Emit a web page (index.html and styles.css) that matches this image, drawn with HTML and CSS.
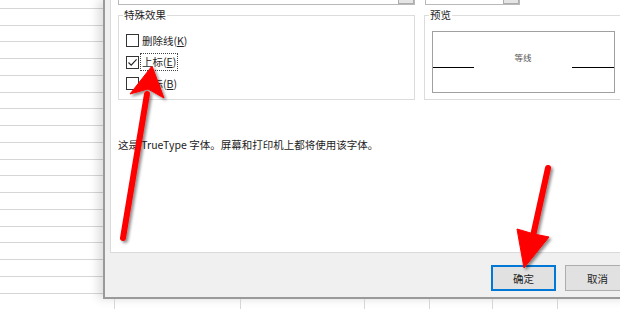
FILE: index.html
```html
<!DOCTYPE html>
<html lang="zh-CN">
<head>
    <meta charset="UTF-8">
    <meta name="viewport" content="width=device-width, initial-scale=1.0">
    <title>设置单元格格式</title>
    <link rel="stylesheet" href="styles.css">
</head>
<body>
    <div class="sheet">
        <div class="dialog">
            <div class="panel">
                <div class="combos">
                    <div class="combo combo-wide"><span class="combo-btn"></span></div>
                    <div class="combo combo-narrow"><span class="combo-btn"></span></div>
                </div>

                <div class="groups">
                    <fieldset class="group group-effects">
                        <legend>特殊效果</legend>
                        <div class="check-row">
                            <span class="box"></span>
                            <span class="label">删除线(<u>K</u>)</span>
                        </div>
                        <div class="check-row">
                            <span class="box checked">
                                <svg width="11" height="11" viewBox="0 0 11 11"><path d="M1.5 5.5 L4.2 8.2 L9.6 2.4" fill="none" stroke="#222" stroke-width="1.1"/></svg>
                            </span>
                            <span class="label focus">上标(<u>E</u>)</span>
                        </div>
                        <div class="check-row">
                            <span class="box"></span>
                            <span class="label">下标(<u>B</u>)</span>
                        </div>
                    </fieldset>

                    <fieldset class="group group-preview">
                        <legend>预览</legend>
                        <div class="preview-box">
                            <div class="sample">
                                <span class="rule"></span>
                                <span class="sample-text">等线</span>
                                <span class="rule rule-right"></span>
                            </div>
                        </div>
                    </fieldset>
                </div>

                <p class="info">这是 TrueType 字体。屏幕和打印机上都将使用该字体。</p>
            </div>

            <div class="footer">
                <button class="btn btn-default">确定</button>
                <button class="btn">取消</button>
            </div>
        </div>

        <div class="foot">
            <span class="cell" style="width:126px"></span>
            <span class="cell" style="width:125px"></span>
            <span class="cell" style="width:65px"></span>
            <span class="cell" style="width:62px"></span>
            <span class="cell" style="width:65px"></span>
            <span class="cell" style="width:63px"></span>
        </div>
    </div>

    <!-- annotation arrows drawn over the screenshot -->
    <svg class="arrows" width="620" height="309" viewBox="0 0 620 309">
        <defs>
            <filter id="shade" x="-50%" y="-50%" width="200%" height="200%">
                <feDropShadow dx="2" dy="2" stdDeviation="1.6" flood-color="#000" flood-opacity="0.45"/>
            </filter>
        </defs>
        <g filter="url(#shade)" fill="#ff0000" stroke="#ff0000">
            <line x1="123" y1="238" x2="147" y2="94" stroke-width="6" stroke-linecap="round"/>
            <polygon points="152,66 130,94 148,89 164,98" stroke-width="1" stroke-linejoin="round"/>
            <line x1="548" y1="168" x2="533" y2="236" stroke-width="6" stroke-linecap="round"/>
            <polygon points="524,268 517,229 534,234 549,237" stroke-width="1" stroke-linejoin="round"/>
        </g>
    </svg>
</body>
</html>
```

FILE: styles.css
```css
body {
    margin: 0;
    width: 620px;
    height: 309px;
    overflow: hidden;
    position: relative;
    background: #fff;
    font-family: "Noto Sans CJK SC", "Noto Sans", sans-serif;
    font-size: 10.5px;
    color: #1e1e1e;
}

.sheet {
    height: 309px;
    background-image: linear-gradient(to bottom,
        #d6d6d6 0, #d6d6d6 1px, transparent 1px, transparent 17px,
        #d6d6d6 17px, #d6d6d6 18px, transparent 18px, transparent 33px,
        #d6d6d6 33px, #d6d6d6 34px, transparent 34px, transparent 50px,
        #d6d6d6 50px, #d6d6d6 51px, transparent 51px, transparent 67px);
    background-size: 100% 67px;
    background-position: 0 8px;
}

.dialog {
    margin-left: 103px;
    width: 540px;
    height: 297px;
    padding-left: 5px;
    background: #f0f0f0;
    border-left: 2px solid #9a9a9a;
    border-bottom: 2px solid #9a9a9a;
    box-shadow: -5px 0 9px rgba(0, 0, 0, 0.13);
    display: flex;
    flex-direction: column;
}

.panel {
    height: 252px;
    padding-left: 7px;
    background: #fff;
    border-left: 1px solid #dadada;
    border-bottom: 1px solid #dadada;
}

.combos {
    display: flex;
    gap: 10px;
    height: 5px;
}

.combo {
    height: 4px;
    border: 1px solid #b9b9b9;
    border-top: none;
    display: flex;
    justify-content: flex-end;
}

.combo-wide {
    width: 295px;
}

.combo-narrow {
    width: 93px;
}

.combo-btn {
    width: 14px;
    height: 3px;
    background: #e5e5e5;
    border: 1px solid #adadad;
    border-top: none;
}

.groups {
    display: flex;
    gap: 9px;
    margin-top: 3px;
}

.group {
    margin: 0;
    height: 92px;
    box-sizing: border-box;
    padding: 0 0 0 4px;
    border: 1px solid #dcdcdc;
}

.group legend {
    padding: 0 1px;
    line-height: 14px;
    color: #1e1e1e;
}

.group-effects {
    width: 297px;
}

.group-preview {
    width: 220px;
}

.group-effects .check-row:first-of-type {
    margin-top: 8px;
}

.check-row {
    height: 21.5px;
    display: flex;
    align-items: center;
    padding-left: 3px;
}

.box {
    width: 11px;
    height: 11px;
    border: 1px solid #333;
    background: #fff;
    margin-right: 2px;
    display: flex;
}

.label {
    line-height: 16px;
    padding: 0 1px;
}

.focus {
    border: 1px dotted #444;
    margin-left: -1px;
    padding: 0 1px;
}

.preview-box {
    width: 181px;
    height: 60px;
    margin: 9px 0 0 3px;
    border: 1px solid #a0a0a0;
}

.sample {
    display: flex;
    align-items: flex-end;
    margin-top: 19px;
}

.rule {
    width: 41px;
    border-bottom: 1px solid #000;
}

.rule-right {
    width: 42px;
}

.sample-text {
    flex: 1;
    text-align: center;
    font-size: 8.5px;
    line-height: 12px;
    padding-bottom: 5px;
    color: #555;
}

.info {
    margin: 37px 0 0;
    line-height: 16px;
    color: #222;
}

.footer {
    display: flex;
    gap: 9px;
    padding: 12px 0 0 381px;
}

.btn {
    width: 65px;
    height: 26px;
    box-sizing: border-box;
    background: #e1e1e1;
    border: 1px solid #adadad;
    font-family: "Noto Sans CJK SC", sans-serif;
    font-size: 10.5px;
    color: #1e1e1e;
    padding: 0;
}

.btn-default {
    border: 2px solid #0078d7;
}

.foot {
    display: flex;
    height: 10px;
    padding-left: 114px;
}

.cell {
    border-left: 1px solid #d6d6d6;
}

.arrows {
    position: absolute;
    top: 0;
    left: 0;
    pointer-events: none;
}
```
